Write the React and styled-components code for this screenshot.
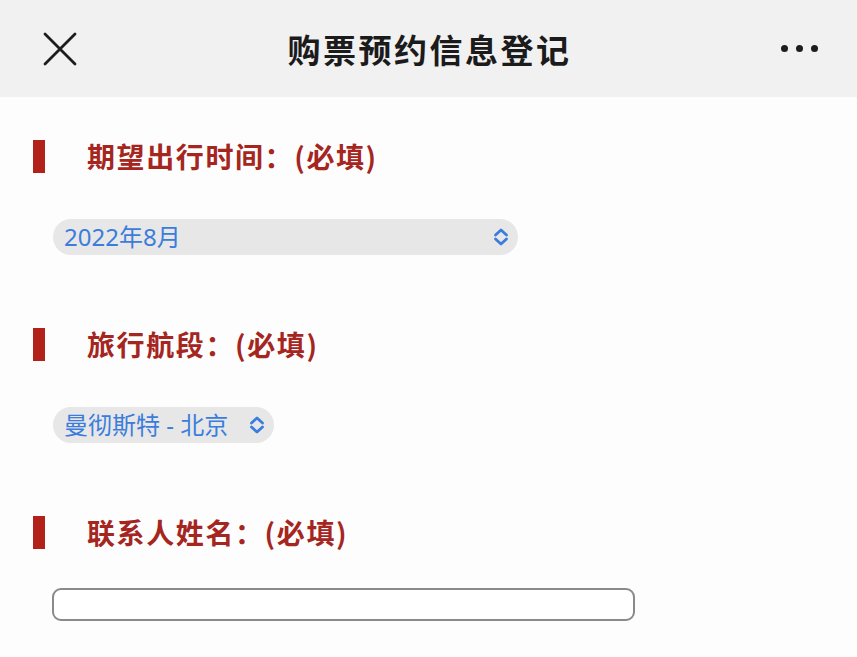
import React from "react";
import styled, { createGlobalStyle } from "styled-components";

const GlobalStyle = createGlobalStyle`
  html, body {
    margin: 0;
    padding: 0;
    background: #fdfdfd;
    font-family: "Noto Sans", "Noto Sans CJK SC", sans-serif;
  }
`;

function Chevron() {
  return (
    <svg width="16" height="20" viewBox="0 0 16 20" fill="none">
      <path
        d="M2.5 8 L8 3 L13.5 8 M2.5 12 L8 17 L13.5 12"
        stroke="#3b7ddd"
        strokeWidth="2.8"
        strokeLinecap="round"
        strokeLinejoin="round"
      />
    </svg>
  );
}

function CloseIcon() {
  return (
    <svg width="34" height="34" viewBox="0 0 34 34">
      <path d="M2 2 L32 32 M32 2 L2 32" stroke="#1d1d1d" strokeWidth="2.8" strokeLinecap="round" />
    </svg>
  );
}

function App() {
  return (
    <Page>
      <GlobalStyle />
      <Header>
        <HeaderButton>
          <CloseIcon />
        </HeaderButton>
        <Title>购票预约信息登记</Title>
        <HeaderButton>
          <Dots>
            <Dot />
            <Dot />
            <Dot />
          </Dots>
        </HeaderButton>
      </Header>

      <Content>
        <Section>
          <LabelRow>
            <Bar />
            <Label>期望出行时间：(必填)</Label>
          </LabelRow>
          <Field gap={46}>
            <Select wide>
              <SelectText>2022年8月</SelectText>
              <Chevron />
            </Select>
          </Field>
        </Section>

        <Section>
          <LabelRow>
            <Bar />
            <Label>旅行航段：(必填)</Label>
          </LabelRow>
          <Field gap={46}>
            <Select>
              <SelectText>曼彻斯特 - 北京</SelectText>
              <Chevron />
            </Select>
          </Field>
        </Section>

        <Section>
          <LabelRow>
            <Bar />
            <Label>联系人姓名：(必填)</Label>
          </LabelRow>
          <Field gap={39}>
            <TextInput type="text" />
          </Field>
        </Section>
      </Content>
    </Page>
  );
}

const Page = styled.div`
  width: 857px;
  height: 657px;
  overflow: hidden;
  background: #fdfdfd;
`;

const Header = styled.div`
  height: 97px;
  background: #f1f1f1;
  display: flex;
  align-items: center;
  justify-content: space-between;
  padding: 0 39px 0 41px;
  box-sizing: border-box;
`;

const HeaderButton = styled.div`
  width: 38px;
  display: flex;
  align-items: center;
  justify-content: center;
`;

const Title = styled.div`
  font-family: "Noto Sans CJK SC", sans-serif;
  font-size: 33px;
  font-weight: 600;
  letter-spacing: 2.5px;
  color: #1b1b1b;
`;

const Dots = styled.div`
  display: flex;
  gap: 8px;
`;

const Dot = styled.span`
  width: 7px;
  height: 7px;
  border-radius: 50%;
  background: #1d1d1d;
`;

const Content = styled.div`
  padding: 43px 0 0 33px;
  display: flex;
  flex-direction: column;
  gap: 73px;
`;

const Section = styled.div`
  display: flex;
  flex-direction: column;
`;

const LabelRow = styled.div`
  display: flex;
  align-items: center;
  gap: 42px;
  height: 33px;
`;

const Bar = styled.span`
  width: 12px;
  height: 33px;
  background: #b3211b;
`;

const Label = styled.div`
  font-family: "Noto Sans CJK SC", sans-serif;
  font-size: 28px;
  font-weight: 700;
  letter-spacing: 1.6px;
  color: #a5261f;
  line-height: 33px;
`;

const Field = styled.div`
  margin-top: ${(p) => p.gap}px;
  margin-left: 20px;
  display: flex;
`;

const Select = styled.div`
  height: 36px;
  width: ${(p) => (p.wide ? "465px" : "auto")};
  box-sizing: border-box;
  border-radius: 18px;
  background: #e7e7e7;
  display: flex;
  align-items: center;
  justify-content: space-between;
  gap: 21px;
  padding: 0 9px 0 11px;
`;

const SelectText = styled.span`
  font-family: "Noto Sans", "Noto Sans CJK SC", sans-serif;
  font-size: 24px;
  color: #3b7ddd;
  line-height: 36px;
`;

const TextInput = styled.input`
  width: 583px;
  height: 33px;
  box-sizing: border-box;
  border: 2px solid #8a8a8a;
  border-radius: 9px;
  background: #fff;
  outline: none;
  margin-left: -1px;
`;

export default App;
